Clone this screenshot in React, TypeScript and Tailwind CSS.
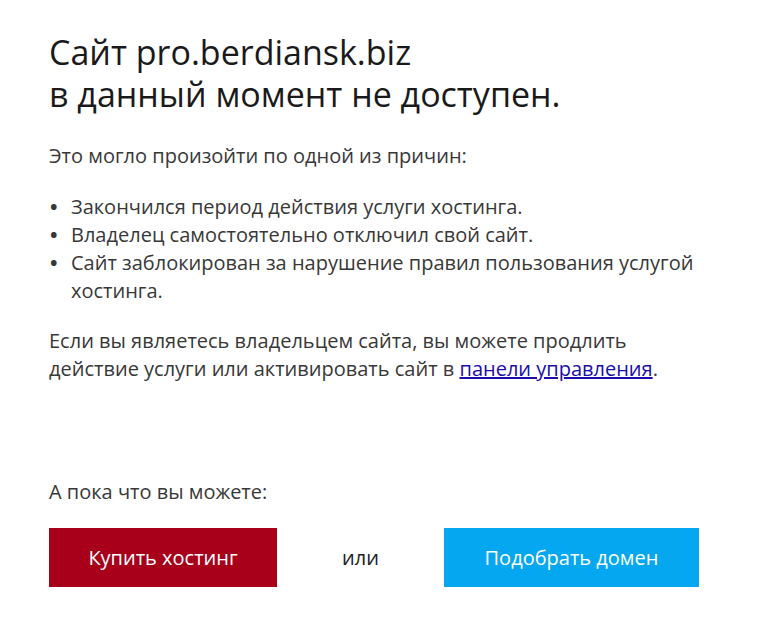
export default function App() {
    return (
        <div className="min-h-screen bg-white font-['Open_Sans',sans-serif]">
            <div className="pl-[49px] pr-[40px] pt-[31px]">
                <h1 className="text-[34px] leading-[42px] text-[#1a1a1a] font-normal">
                    Сайт pro.berdiansk.biz
                    <br />
                    в данный момент не доступен.
                </h1>

                <div className="mt-[27px] text-[20px] leading-[28px] text-[#383838] [font-stretch:99%]">
                    <p>Это могло произойти по одной из причин:</p>

                    <ul className="mt-[23px] w-[660px]">
                        <li className="flex">
                            <span className="w-[22px] shrink-0 pl-[1px] font-bold">•</span>
                            <span>Закончился период действия услуги хостинга.</span>
                        </li>
                        <li className="flex">
                            <span className="w-[22px] shrink-0 pl-[1px] font-bold">•</span>
                            <span>Владелец самостоятельно отключил свой сайт.</span>
                        </li>
                        <li className="flex">
                            <span className="w-[22px] shrink-0 pl-[1px] font-bold">•</span>
                            <span>
                                Сайт заблокирован за нарушение правил пользования услугой
                                <br />
                                хостинга.
                            </span>
                        </li>
                    </ul>

                    <p className="mt-[22px] w-[660px]">
                        Если вы являетесь владельцем сайта, вы можете продлить
                        <br />
                        действие услуги или активировать сайт в{" "}
                        <a href="#" className="text-[#1a0dab] underline">панели управления</a>.
                    </p>

                    <p className="mt-[95px]">А пока что вы можете:</p>

                    <div className="mt-[22px] flex items-center">
                        <button className="w-[228px] h-[59px] bg-[#a8001a] text-white text-[20px]">
                            Купить хостинг
                        </button>
                        <span className="w-[167px] text-center text-[20px] text-[#222]">или</span>
                        <button className="w-[255px] h-[59px] bg-[#05a8f0] text-white text-[20px]">
                            Подобрать домен
                        </button>
                    </div>
                </div>
            </div>
        </div>
    );
}
